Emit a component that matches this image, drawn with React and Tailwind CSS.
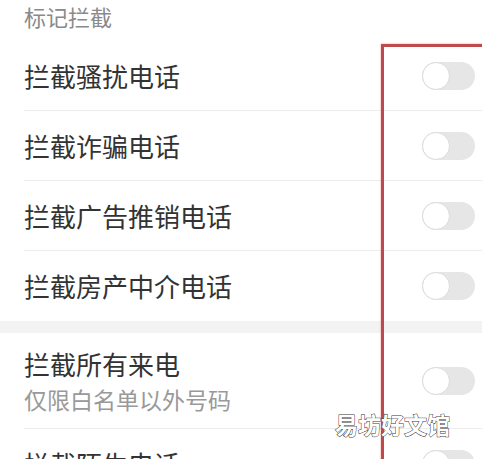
import React from "react";

const groupOne = ["拦截骚扰电话", "拦截诈骗电话", "拦截广告推销电话", "拦截房产中介电话"];

const Toggle = () => (
  <div className="relative w-[53px] h-[28px] rounded-full bg-[#e6e6e6] shrink-0">
    <div className="absolute left-0 top-0 w-[28px] h-[28px] rounded-full bg-white border border-[#dcdcdc]" />
  </div>
);

const Row = ({ title, sub, last, tall }) => (
  <div className={`flex items-center justify-between pr-[7px] ${tall ? "h-[96px]" : "h-[70px]"} ${last ? "" : "border-b border-[#ececec]"}`}>
    <div className="flex flex-col">
      <span className="text-[26px] leading-[34px] text-[#333]">{title}</span>
      {sub && <span className="text-[23px] leading-[30px] text-[#999] mt-[3px]">{sub}</span>}
    </div>
    <Toggle />
  </div>
);

export default function App() {
  return (
    <div className="relative w-[482px] h-[459px] overflow-hidden bg-white font-['Noto_Sans_CJK_SC','Noto_Sans',sans-serif]">
      <div className="h-[41px] pl-[24px] flex items-start pt-[1px]">
        <span className="text-[22px] leading-[30px] text-[#8a8a8a]">标记拦截</span>
      </div>

      <div className="pl-[24px]">
        {groupOne.map((t, i) => (
          <Row key={t} title={t} last={i === groupOne.length - 1} />
        ))}
      </div>

      <div className="h-[12px] bg-[#f3f3f3]" />

      <div className="pl-[24px]">
        <Row title="拦截所有来电" sub="仅限白名单以外号码" tall />
        <Row title="拦截陌生电话" last />
      </div>

      {/* red highlight frame */}
      <div className="absolute left-[381px] top-[44px] w-[200px] h-[500px] border-[3px] border-[#bf4a4c] shadow-[0_0_2px_#e8a0a0]" />

      {/* watermark */}
      <div className="absolute left-[335px] top-[410px] text-[23px] leading-[28px] text-white font-bold [-webkit-text-stroke:1px_#3a3a3a] [paint-order:stroke_fill]">
        易坊好文馆
      </div>
    </div>
  );
}
